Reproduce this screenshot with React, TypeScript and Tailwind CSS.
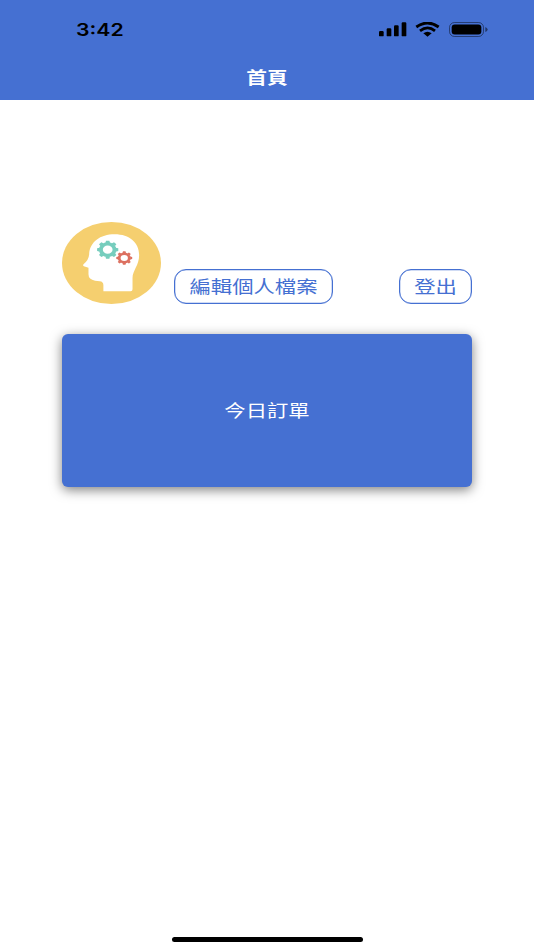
import React from 'react';

const FONT = 'font-["Noto_Sans_CJK_TC","Noto_Sans_CJK_SC",sans-serif]';

function Gear({ cx, cy, rx, ry, hole, color }: { cx: number; cy: number; rx: number; ry: number; hole: number; color: string }) {
  return (
    <g transform={`translate(${cx} ${cy}) scale(${rx / 100} ${ry / 100})`}>
      <circle r={(82 + hole) / 2} fill="none" stroke={color} strokeWidth={82 - hole} />
      {[0, 45, 90, 135, 180, 225, 270, 315].map((a) => (
        <path key={a} d="M-22 -74L-16 -100H16L22 -74Z" fill={color} transform={`rotate(${a})`} />
      ))}
    </g>
  );
}

function Avatar() {
  return (
    <svg className="h-[82px] w-[99px] shrink-0" viewBox="22 20 299 246" preserveAspectRatio="none">
      <ellipse cx="171.500" cy="143" rx="149.500" ry="123" fill="#f5cf6f" />
      <path
        fill="#fff"
        d="M147 228V210Q147 199 136 198L122 196Q102 193 102 177V157L88 153Q84 151 87 147Q103 134 104 117C106 80 137 57 181 57C226 57 255 82 255 119C255 151 235 165 235 188V222Q235 228 229 228Z"
      />
      <Gear cx={160} cy={103} rx={32} ry={27} hole={46} color="#76cdbd" />
      <Gear cx={210} cy={128} rx={24} ry={20} hole={46} color="#dc7060" />
    </svg>
  );
}

function StatusIcons() {
  return (
    <svg className="h-[15px] w-[109px]" viewBox="27 36 327 45" preserveAspectRatio="none">
      <rect x="27" y="63" width="14" height="16" rx="3.500" />
      <rect x="50" y="55" width="14" height="24" rx="3.500" />
      <rect x="72" y="46" width="14" height="33" rx="3.500" />
      <rect x="95" y="37" width="14" height="42" rx="3.500" />
      <g fill="none" stroke="#000" strokeWidth="8.500">
        <path d="M139 51Q173 27 206 51" />
        <path d="M150 62.500Q173 45 195 62.500" />
      </g>
      <path d="M160 70Q172.500 60 185 70L172.500 80Z" />
      <rect x="238.500" y="37.500" width="102" height="42" rx="15" fill="none" stroke="#000" strokeOpacity=".45" strokeWidth="3" />
      <rect x="245" y="43.500" width="89" height="30" rx="9" />
      <path d="M346 51Q353 54 353 58.500Q353 63 346 66Z" fillOpacity=".5" />
    </svg>
  );
}

function OutlineButton({ label, width }: { label: string; width: string }) {
  return (
    <button
      className={`flex h-[35px] items-center justify-center rounded-[12px] border border-[#4570d2] bg-white pb-px text-[#4570d2] shadow-[inset_0_0_0_0.25px_#4570d2] ${width}`}
    >
      <span className="scale-x-[1.22] whitespace-nowrap text-[17.5px] leading-none font-normal">{label}</span>
    </button>
  );
}

export default function App() {
  return (
    <div className={`flex h-[950px] w-[534px] flex-col overflow-hidden bg-white ${FONT}`}>
      <header className="flex h-[99.500px] shrink-0 flex-col bg-[#4570d2]">
        <div className="flex h-[58px] items-center justify-between pr-[46px] pl-[76px]">
          <span className="origin-left scale-x-[1.25] pt-[3px] font-['Inter',sans-serif] text-[17px] leading-none font-semibold text-black">
            3:42
          </span>
          <StatusIcons />
        </div>
        <h1 className="flex h-[36px] items-center justify-center text-[17px] leading-none font-bold text-white">
          <span className="scale-x-[1.22]">首頁</span>
        </h1>
      </header>

      <main className="flex flex-1 flex-col px-[62px] pt-[122px]">
        <div className="flex items-end">
          <Avatar />
          <div className="ml-[13px] flex flex-1 justify-between">
            <OutlineButton label="編輯個人檔案" width="w-[159px]" />
            <OutlineButton label="登出" width="w-[73px]" />
          </div>
        </div>
        <button className="mt-[30.500px] flex h-[153px] w-full items-center justify-center rounded-[6px] bg-[#4570d2] pb-[2px] text-white shadow-[0_3px_12px_rgba(0,0,0,0.5)]">
          <span className="scale-x-[1.22] text-[17.5px] leading-none font-normal">今日訂單</span>
        </button>
      </main>

      <footer className="flex h-[13.500px] shrink-0 justify-center">
        <div className="h-[5px] w-[191px] rounded-full bg-black" />
      </footer>
    </div>
  );
}
